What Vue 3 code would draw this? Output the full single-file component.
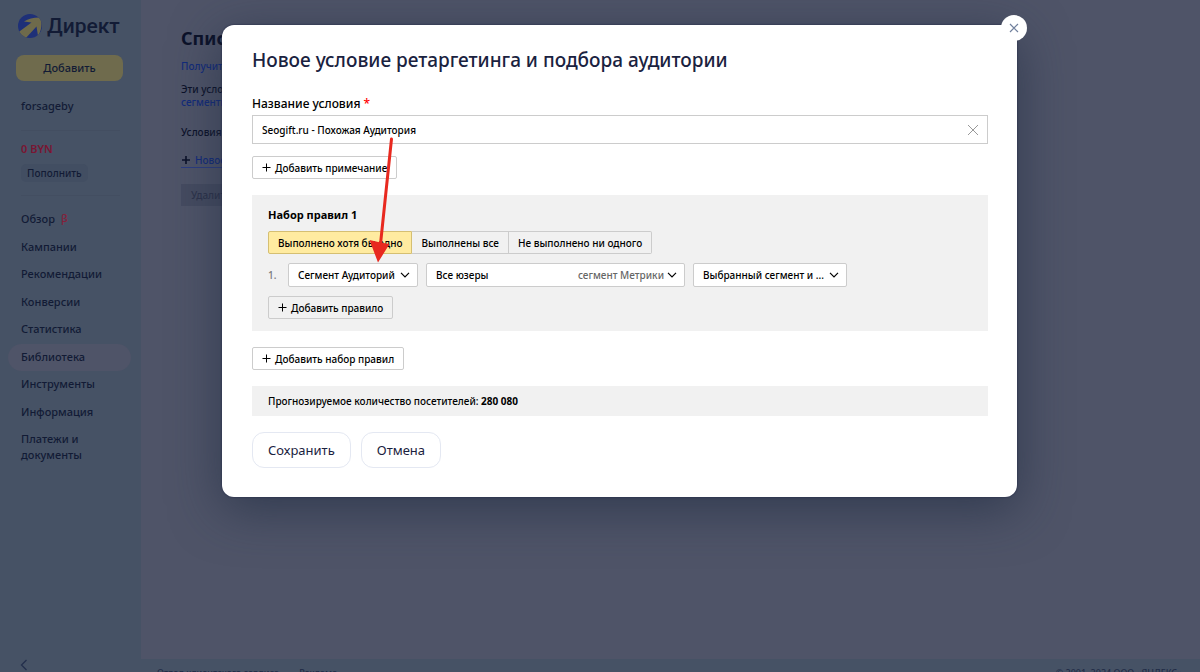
<script setup>
import { ref } from 'vue'

const nav = [
  { label: 'Обзор', beta: true },
  { label: 'Кампании' },
  { label: 'Рекомендации' },
  { label: 'Конверсии' },
  { label: 'Статистика' },
  { label: 'Библиотека', active: true },
  { label: 'Инструменты' },
  { label: 'Информация' },
  { label: 'Платежи и документы' },
]

const conditionName = ref('Seogift.ru - Похожая Аудитория')
const modes = ['Выполнено хотя бы одно', 'Выполнены все', 'Не выполнено ни одного']
const mode = ref(0)
const ruleType = ref('Сегмент Аудиторий')
const scope = ref('Выбранный сегмент и ...')
</script>

<template>
  <div class="page">
    <aside class="sidebar">
      <a class="logo" href="#">
        <svg class="logo-mark" viewBox="0 0 24 24" aria-hidden="true">
          <defs>
            <clipPath id="disc"><circle cx="12" cy="12" r="12" /></clipPath>
          </defs>
          <g clip-path="url(#disc)">
            <rect width="24" height="24" fill="#1e3078" />
            <path d="M6 7.500 Q13 3 23 3.500 Q25 14 20 22 L18.500 12.500 L7 25 L0 18.500 L13.500 8.500 Z" fill="#6e6a4b" />
          </g>
        </svg>
        <span>Директ</span>
      </a>
      <button class="add" type="button">Добавить</button>
      <div class="account">forsageby</div>
      <div class="balance">
        <div class="sum">0 BYN</div>
        <button class="refill" type="button">Пополнить</button>
      </div>
      <nav class="nav">
        <a v-for="item in nav" :key="item.label" href="#" :class="{ active: item.active }">{{ item.label }}<sup v-if="item.beta">β</sup></a>
      </nav>
      <button class="collapse" type="button" aria-label="Свернуть меню">
        <svg viewBox="0 0 8 12" aria-hidden="true"><path d="M6.500 1 L1.500 6 L6.500 11" /></svg>
      </button>
    </aside>

    <div class="content">
      <main class="main">
        <h1>Список</h1>
        <p class="more"><a href="#">Получить</a></p>
        <p class="about">Эти условия<br /><a href="#">сегменты</a></p>
        <p class="terms">Условия</p>
        <a class="new" href="#">
          <svg viewBox="0 0 10 10" aria-hidden="true"><path d="M5 1 V9 M1 5 H9" /></svg>Новое
        </a>
        <button class="remove" type="button" disabled>Удалить</button>
      </main>
      <footer class="footer">
        <a href="#">Отдел клиентского сервиса</a>
        <a href="#">Реклама</a>
        <span class="copy">© 2001–2024 ООО «ЯНДЕКС»</span>
      </footer>
    </div>

    <div class="overlay">
      <section class="modal" role="dialog" aria-labelledby="modal-title">
        <button class="close" type="button" aria-label="Закрыть">
          <svg viewBox="0 0 10 10" aria-hidden="true"><path d="M1 1 L9 9 M9 1 L1 9" /></svg>
        </button>
        <h2 id="modal-title">Новое условие ретаргетинга и подбора аудитории</h2>

        <label class="field-label" for="condition">Название условия <span>*</span></label>
        <div class="field">
          <input id="condition" v-model="conditionName" type="text" />
          <button type="button" aria-label="Очистить" @click="conditionName = ''">
            <svg viewBox="0 0 12 12" aria-hidden="true"><path d="M1 1 L11 11 M11 1 L1 11" /></svg>
          </button>
        </div>

        <button class="small" type="button">
          <svg viewBox="0 0 9 9" aria-hidden="true"><path d="M4.500 0.500 V8.500 M0.500 4.500 H8.500" /></svg>Добавить примечание
        </button>

        <div class="rules">
          <h3>Набор правил 1</h3>
          <div class="modes">
            <button v-for="(m, i) in modes" :key="m" type="button" :aria-pressed="mode === i" :class="{ on: mode === i }" @click="mode = i">{{ m }}</button>
          </div>
          <div class="rule">
            <span class="num">1.</span>
            <div class="select type">
              <select v-model="ruleType" aria-label="Тип правила"><option>Сегмент Аудиторий</option></select>
              <svg viewBox="0 0 10 6" aria-hidden="true"><path d="M1 0.800 L5 4.800 L9 0.800" /></svg>
            </div>
            <button class="segment" type="button" aria-haspopup="listbox">
              <span>Все юзеры</span><span class="hint">сегмент Метрики</span>
              <svg viewBox="0 0 10 6" aria-hidden="true"><path d="M1 0.800 L5 4.800 L9 0.800" /></svg>
            </button>
            <div class="select scope">
              <select v-model="scope" aria-label="Охват"><option>Выбранный сегмент и ...</option></select>
              <svg viewBox="0 0 10 6" aria-hidden="true"><path d="M1 0.800 L5 4.800 L9 0.800" /></svg>
            </div>
          </div>
          <button class="small" type="button">
            <svg viewBox="0 0 9 9" aria-hidden="true"><path d="M4.500 0.500 V8.500 M0.500 4.500 H8.500" /></svg>Добавить правило
          </button>
        </div>

        <button class="small" type="button">
          <svg viewBox="0 0 9 9" aria-hidden="true"><path d="M4.500 0.500 V8.500 M0.500 4.500 H8.500" /></svg>Добавить набор правил
        </button>

        <div class="forecast">Прогнозируемое количество посетителей: <b>280 080</b></div>

        <div class="actions">
          <button type="button">Сохранить</button>
          <button type="button">Отмена</button>
        </div>

        <svg class="pointer" viewBox="0 0 26 128" aria-hidden="true">
          <path d="M22.500 2 L11.500 107" stroke="#e8291f" stroke-width="3" stroke-linecap="round" />
          <path d="M0.500 103 L11.500 105.500 L20.500 107 L9 125.500 Z" fill="#e8291f" />
        </svg>
      </section>
    </div>
  </div>
</template>

<style>
body {
  margin: 0;
}
</style>

<style scoped>
.page {
  position: relative;
  display: flex;
  height: 100vh;
  overflow: hidden;
  background: #465265;
  color: #121b35;
  font: 500 11px/16px "Noto Sans", "Open Sans", sans-serif;
}
button,
input,
select {
  font: inherit;
  color: inherit;
  margin: 0;
  padding: 0;
  border: 0;
  background: none;
  box-sizing: border-box;
}
h1,
h2,
h3,
p {
  margin: 0;
}
a {
  color: inherit;
  text-decoration: none;
}
svg {
  fill: none;
  flex: none;
}

.sidebar {
  display: flex;
  flex-direction: column;
  flex: none;
  width: 141px;
  box-sizing: border-box;
  padding-top: 13px;
}
.logo {
  display: flex;
  align-items: center;
  gap: 5px;
  height: 26px;
  margin-left: 18px;
  font-family: Roboto, "Noto Sans", sans-serif;
  font-size: 21px;
}
.logo-mark {
  width: 24px;
  height: 24px;
}
.add {
  height: 26px;
  margin: 16px 18px 0 16px;
  border-radius: 8px;
  background: #6f6b4d;
}
.account {
  margin: 17px 21px 0;
  padding-bottom: 16px;
  border-bottom: 1px solid #434e61;
}
.balance {
  margin: 10px 21px 0;
  padding-bottom: 13px;
  border-bottom: 1px solid #434e61;
}
.sum {
  color: #7a1532;
  font-weight: 600;
}
.refill {
  height: 18px;
  margin-top: 7px;
  padding: 0 6px;
  border-radius: 5px;
  background: #424e62;
  font-size: 10px;
}
.nav {
  display: flex;
  flex-direction: column;
  justify-content: space-between;
  min-height: 263px;
  margin: 10px 10px 0 8px;
}
.nav a {
  padding: 5px 13px 6px;
  border-radius: 14px;
}
.nav sup {
  margin-left: 6px;
  color: #84203a;
  font-size: 11px;
  line-height: 0;
  vertical-align: 1px;
}
.nav .active {
  background: #4f5468;
}
.collapse {
  width: 8px;
  height: 12px;
  margin: auto 0 1px 20px;
}
.collapse svg {
  display: block;
  width: 8px;
  height: 12px;
  stroke: #232f4c;
  stroke-width: 1.3;
}

.content {
  display: flex;
  flex: 1;
  flex-direction: column;
  min-width: 0;
}
.main {
  flex: 1;
  padding: 26px 40px 0;
  background: #4f5468;
  white-space: nowrap;
  color: #0b1128;
  font-size: 10px;
}
.main a {
  color: #122b7b;
}
h1 {
  font-size: 18px;
  line-height: 24px;
  font-weight: 700;
}
.more {
  margin-top: 8px;
}
.about {
  margin-top: 9px;
  line-height: 13px;
}
.terms {
  margin-top: 15px;
}
.main .new {
  display: flex;
  align-items: center;
  gap: 4px;
  width: 60px;
  margin-top: 13px;
  border-bottom: 1px solid #2b3c80;
  line-height: 14px;
}
.new svg {
  width: 10px;
  height: 10px;
  stroke: #0b1128;
  stroke-width: 1.6;
}
.remove {
  height: 22px;
  margin-top: 16px;
  padding: 0 10px;
  background: #454b60;
  color: #2d334b;
}
.footer {
  display: flex;
  gap: 20px;
  flex: none;
  height: 13px;
  padding: 0 18px 0 16px;
  overflow: hidden;
  font-size: 9px;
  line-height: 27px;
  color: #202b45;
}
.copy {
  margin-left: auto;
}

.overlay {
  position: absolute;
  inset: 0;
  display: flex;
  align-items: flex-start;
  padding: 25px 183px 0 222px;
}
.modal {
  position: relative;
  flex: 1;
  min-width: 0;
  padding: 23px 29px 29px 30px;
  border-radius: 12px;
  background: #fff;
  box-shadow: 0 0 2px #1c2240, 0 12px 50px rgba(32, 44, 66, 0.65);
  color: #000;
  font-size: 10px;
}
.close {
  position: absolute;
  top: -10px;
  right: -10px;
  display: grid;
  place-items: center;
  width: 26px;
  height: 26px;
  border-radius: 50%;
  background: #fff;
}
.close svg {
  width: 10px;
  height: 10px;
  stroke: #71809d;
  stroke-width: 1.2;
}
h2 {
  font-size: 19px;
  line-height: 24px;
  font-weight: 500;
  color: #1a2240;
  white-space: nowrap;
}
.field-label {
  display: block;
  margin-top: 24px;
  font-size: 12px;
}
.field-label span {
  color: #f00;
}
.field {
  display: flex;
  align-items: center;
  height: 29px;
  box-sizing: border-box;
  margin: 3px 0 12px;
  padding: 0 8px 0 9px;
  border: 1px solid #ccc;
}
.field input {
  flex: 1;
  min-width: 0;
  height: 100%;
  outline: 0;
}
.field button,
.field svg {
  display: block;
  width: 12px;
  height: 12px;
  stroke: #999;
}
.small {
  display: flex;
  align-items: center;
  gap: 4px;
  height: 23px;
  padding: 0 9px;
  border: 1px solid #ccc;
  border-radius: 2px;
  white-space: nowrap;
}
.small svg {
  width: 9px;
  height: 9px;
  stroke: #000;
}
.rules {
  margin: 16px 0;
  padding: 12px 16px;
  background: #f1f1f1;
}
h3 {
  font-size: 11px;
  line-height: 16px;
  font-weight: 700;
}
.modes {
  display: flex;
  margin-top: 8px;
}
.modes button {
  height: 23px;
  padding: 0 9px;
  border: 1px solid #ccc;
  border-left-width: 0;
  white-space: nowrap;
}
.modes .on {
  border: 1px solid #d5bf72;
  border-radius: 2px 0 0 2px;
  background: #ffeba0;
}
.modes button:last-child {
  border-radius: 0 2px 2px 0;
}
.rule {
  display: flex;
  align-items: center;
  gap: 8px;
  margin: 9px 0;
}
.num {
  width: 12px;
  color: #777;
}
.select {
  position: relative;
}
.type {
  width: 130px;
}
.scope {
  width: 154px;
}
.select select,
.segment {
  width: 100%;
  height: 24px;
  padding: 0 18px 0 9px;
  border: 1px solid #ccc;
  border-radius: 2px;
  background: #fff;
  appearance: none;
}
.select svg {
  position: absolute;
  top: 9px;
  right: 8px;
}
.rule svg {
  width: 10px;
  height: 6px;
  stroke: #000;
  stroke-width: 1.2;
}
.segment {
  display: flex;
  align-items: center;
  width: 259px;
  padding-right: 7px;
}
.hint {
  margin: 0 3px 0 auto;
  color: #666;
}
.forecast {
  margin-top: 16px;
  padding: 7px 16px;
  background: #f1f1f1;
}
.actions {
  display: flex;
  gap: 10px;
  margin-top: 16px;
}
.actions button {
  height: 36px;
  padding: 0 15px;
  border: 1px solid #e4e8f2;
  border-radius: 12px;
  color: #1a2240;
  font-size: 13px;
  font-weight: 400;
}
.pointer {
  position: absolute;
  top: 112px;
  left: 147px;
  width: 26px;
  height: 128px;
  pointer-events: none;
}
</style>
